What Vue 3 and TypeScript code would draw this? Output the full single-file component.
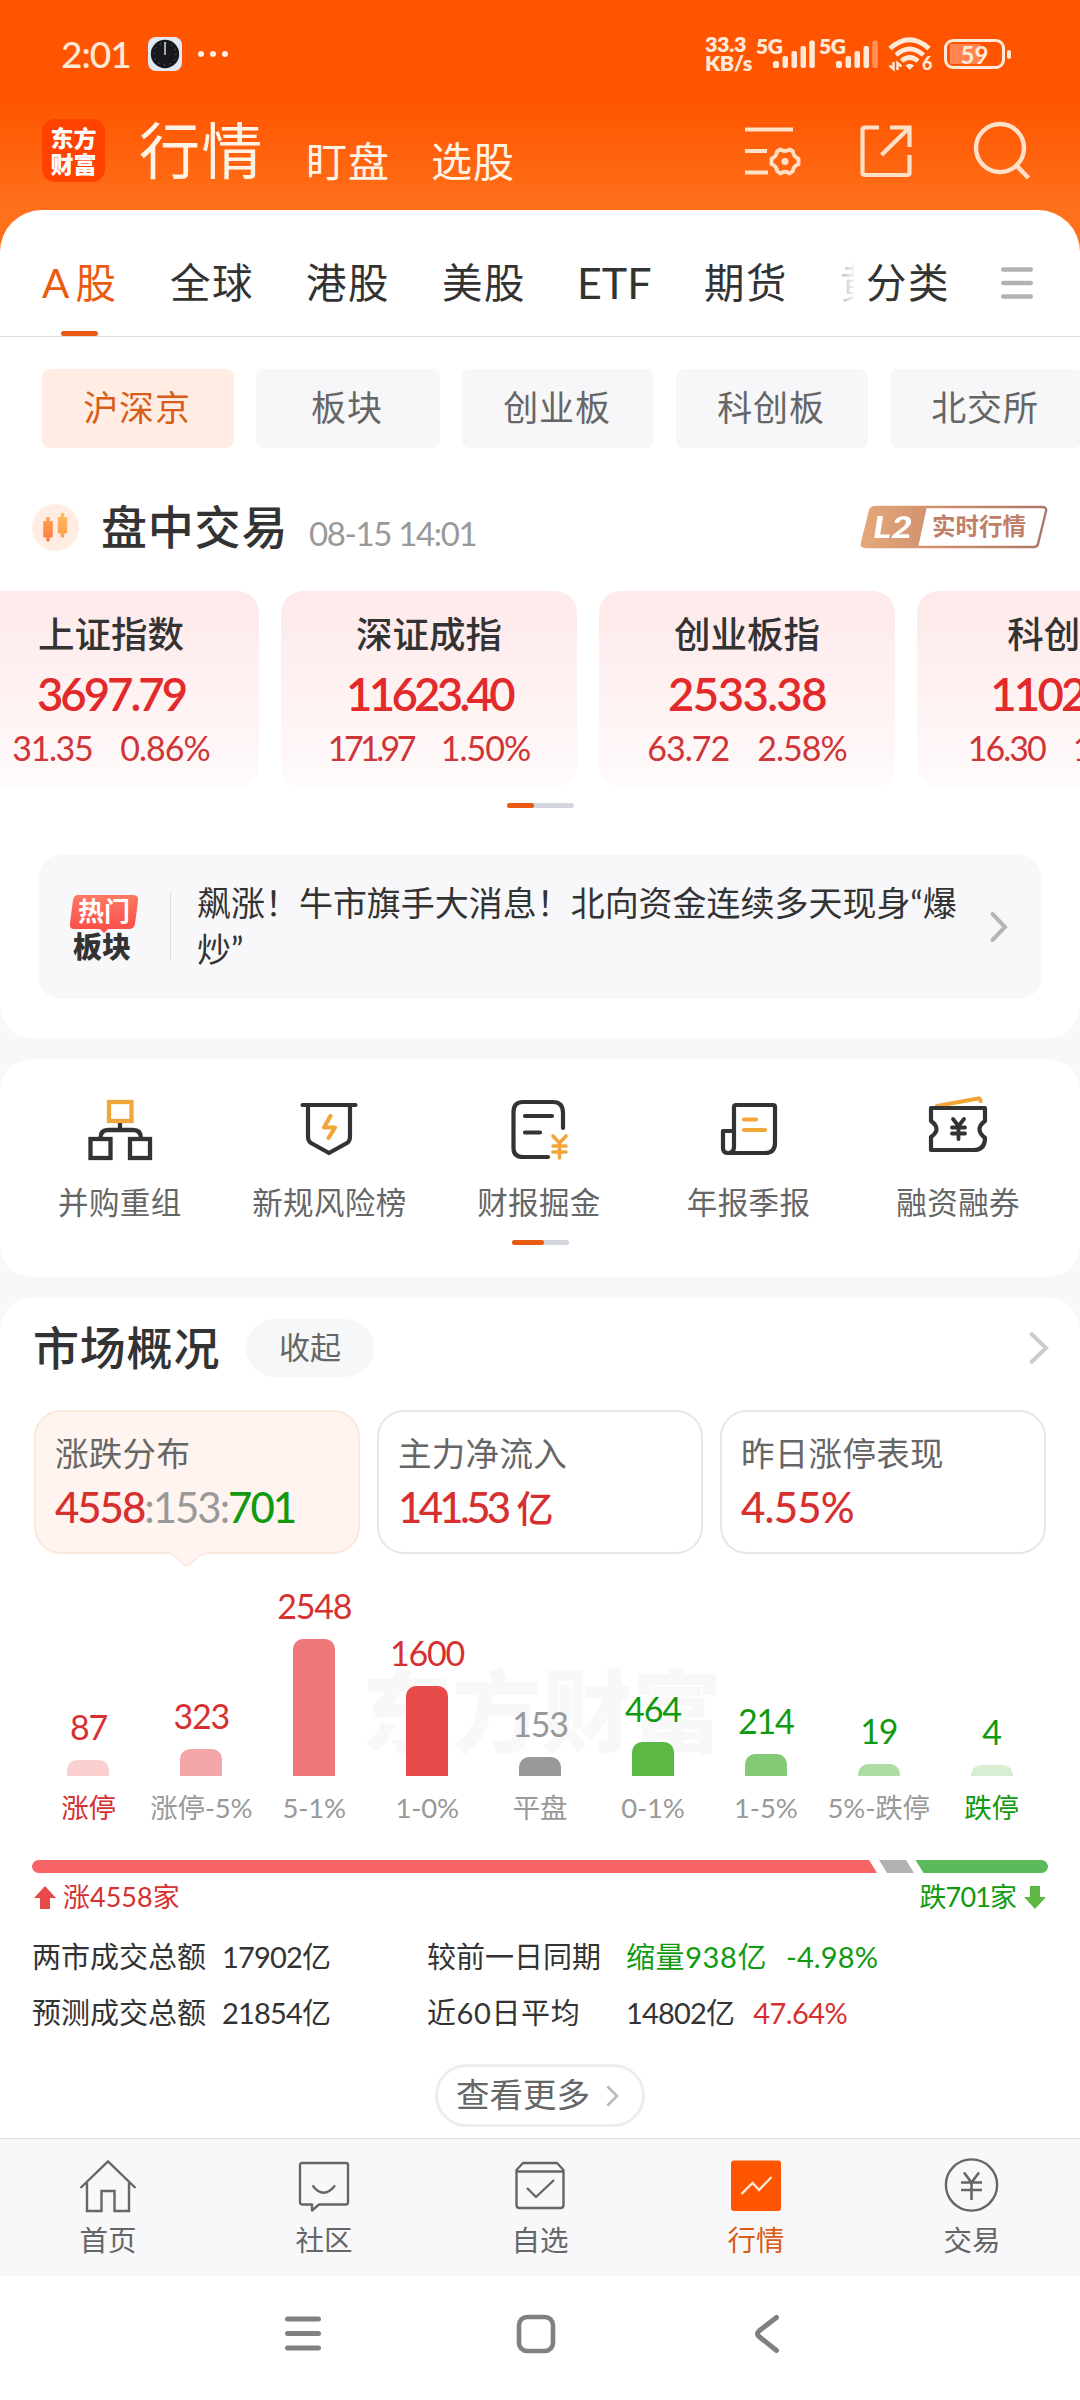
<script setup lang="ts">
interface IndexCard { name: string; value: string; change: string; pct: string; tracking: number; subTracking: number }
interface Bar { label: string; count: number; height: number; color: string; tone: string; labelTone: string }

const markets = ['A股', '全球', '港股', '美股', 'ETF', '期货', '黄']
const boards = ['沪深京', '板块', '创业板', '科创板', '北交所']

const indices: IndexCard[] = [
  { name: '上证指数', value: '3697.79', change: '31.35', pct: '0.86%', tracking: -3, subTracking: -1.4 },
  { name: '深证成指', value: '11623.40', change: '171.97', pct: '1.50%', tracking: -3.7, subTracking: -3.6 },
  { name: '创业板指', value: '2533.38', change: '63.72', pct: '2.58%', tracking: -1.6, subTracking: -1 },
  { name: '科创50', value: '1102.26', change: '16.30', pct: '1.50%', tracking: -2.8, subTracking: -2 },
]

const bars: Bar[] = [
  { label: '涨停', count: 87, height: 15.5, color: '#f9cfd0', tone: 'up', labelTone: 'up' },
  { label: '涨停-5%', count: 323, height: 27, color: '#f4a5a7', tone: 'up', labelTone: 'flat' },
  { label: '5-1%', count: 2548, height: 136.5, color: '#ee7779', tone: 'up', labelTone: 'flat' },
  { label: '1-0%', count: 1600, height: 90, color: '#e84a4a', tone: 'up', labelTone: 'flat' },
  { label: '平盘', count: 153, height: 18.5, color: '#999999', tone: 'flat', labelTone: 'flat' },
  { label: '0-1%', count: 464, height: 34, color: '#5cb843', tone: 'down', labelTone: 'flat' },
  { label: '1-5%', count: 214, height: 21.5, color: '#84ca76', tone: 'down', labelTone: 'flat' },
  { label: '5%-跌停', count: 19, height: 12, color: '#aedda4', tone: 'down', labelTone: 'flat' },
  { label: '跌停', count: 4, height: 11, color: '#d7eed3', tone: 'down', labelTone: 'down' },
]
</script>

<template>
  <div class="screen">
    <div class="status">
      <span class="clock">2:01</span>
      <svg class="app-icon" width="34" height="34" viewBox="0 0 34 34">
        <rect width="34" height="34" rx="8" fill="#e3e9f2" />
        <circle cx="17" cy="17" r="14.2" fill="#17181b" />
        <circle cx="17" cy="17" r="11" fill="none" stroke="#888" stroke-width="1" stroke-dasharray="1 4.76" />
        <path d="M17 5v13" stroke="#cfcfcf" stroke-width="1.6" />
      </svg>
      <svg class="dots" width="32" height="8" viewBox="0 0 32 8" fill="#fff0e2">
        <circle cx="4" cy="4" r="3" /><circle cx="16" cy="4" r="3" /><circle cx="28" cy="4" r="3" />
      </svg>
      <div class="speed"><span>33.3</span><span>KB/s</span></div>
      <div class="signal">
        <span>5G</span>
        <svg width="42" height="28" viewBox="0 0 42 28" fill="#ffe9d8">
          <rect x="0" y="21" width="6" height="7" rx="2" /><rect x="9.5" y="16" width="5.5" height="12" rx="2" />
          <rect x="18.5" y="11" width="5.5" height="17" rx="2" /><rect x="27.5" y="6" width="5.5" height="22" rx="2" />
          <rect x="36.3" y="0.5" width="5.5" height="27.5" rx="2" />
        </svg>
      </div>
      <div class="signal second">
        <span>5G</span>
        <svg width="42" height="28" viewBox="0 0 42 28" fill="#ffe9d8">
          <rect x="0" y="21" width="6" height="7" rx="2" /><rect x="9.5" y="16" width="5.5" height="12" rx="2" />
          <rect x="18.5" y="11" width="5.5" height="17" rx="2" /><rect x="27.5" y="6" width="5.5" height="22" rx="2" />
          <rect x="36.3" y="0.5" width="5.5" height="27.5" rx="2" opacity=".4" />
        </svg>
      </div>
      <div class="wifi">
        <svg width="44" height="34" viewBox="0 0 44 34" fill="none" stroke="#ffe9d8">
          <path d="M2 11.5Q21.500 -6 41 11.500" stroke-width="5" />
          <path d="M8 18Q21.500 6 35.500 18" stroke-width="4.600" />
          <path d="M13.500 24Q21.500 17 30 24" stroke-width="4.600" />
          <path d="M17.500 28.500Q21.500 25 26 28.500L21.700 33z" fill="#ffe9d8" stroke="none" />
          <path d="M5.500 25v7l-4-3.500M9.500 33v-7l4 3.500" stroke-width="2.400" />
        </svg>
        <span>6</span>
      </div>
      <div class="battery"><span>59</span></div>
    </div>

    <div class="nav">
      <div class="logo"><span>东方</span><span>财富</span></div>
      <span class="nav-main">行情</span>
      <span class="nav-sub">盯盘</span>
      <span class="nav-sub">选股</span>
      <div class="nav-icons">
        <svg width="58" height="60" viewBox="0 0 58 60" fill="none" stroke="#ffe0c8" stroke-width="4.200">
          <path d="M0 8.500h48M0 30h22M0 51.500h23" />
          <path d="M35.500 28.500Q40 31.500 44.500 28.500L48 30.500Q48.200 35.500 53.500 37.800V43.300Q48.200 45 48 50L44.500 52.500Q40 49 35.500 52.500L32 50Q31.800 45 26.500 43.300V37.800Q31.800 35.500 32 30.500Z" stroke-width="3.800" stroke-linejoin="round" />
          <circle cx="40" cy="40.500" r="3.500" fill="#ffe0c8" stroke="none" />
        </svg>
        <svg width="53" height="60" viewBox="0 0 53 60" fill="none" stroke="#ffe0c8" stroke-width="4.200">
          <path d="M19 6.500H5Q2.500 6.500 2.500 9V52Q2.500 54 5 54H47Q49.500 54 49.500 52V34M30 6.500H49.500V26M49 7L21.500 34" />
        </svg>
        <svg width="57" height="60" viewBox="0 0 57 60" fill="none" stroke="#ffe0c8" stroke-width="4.400">
          <circle cx="26" cy="27" r="24" /><path d="M42.500 44.500L54.500 57" />
        </svg>
      </div>
    </div>

    <section class="panel first">
      <div class="tabs">
        <span v-for="(m, i) in markets" :key="m" :class="['tab', { on: i === 0, latin: m === 'ETF', fade: m === '黄' }]">{{ m }}</span>
        <span class="tab sort">分类</span>
        <svg class="burger" width="32" height="32" viewBox="0 0 32 32" stroke="#b2b2b2" stroke-width="4.400" stroke-linecap="round">
          <path d="M2.200 2.500H29.800M2.200 16H29.800M2.200 29.500H29.800" />
        </svg>
      </div>
      <div class="chips">
        <span v-for="(b, i) in boards" :key="b" :class="['chip', { on: i === 0, short: b.length === 2 }]">{{ b }}</span>
      </div>

      <div class="session">
        <svg width="47" height="47" viewBox="0 0 47 47">
          <defs>
            <linearGradient id="candle" x1="0" y1="0" x2="0" y2="1"><stop offset="0" stop-color="#ffa04e" /><stop offset="1" stop-color="#ff7c48" /></linearGradient>
            <linearGradient id="candle2" x1="0" y1="0" x2="0" y2="1"><stop offset="0" stop-color="#ffbc5c" /><stop offset="1" stop-color="#ff9c4e" /></linearGradient>
          </defs>
          <circle cx="23.500" cy="23.500" r="23.500" fill="#ffece2" />
          <path d="M14.800 13.500h2.400v4h3v15.500h-3v4h-2.400v-4h-3V17.500h3z" fill="url(#candle)" stroke="url(#candle)" stroke-linejoin="round" />
          <path d="M29.300 9.500h2.400v4h3v15.500h-3v4h-2.400v-4h-3V13.500h3z" fill="url(#candle2)" stroke="url(#candle2)" stroke-linejoin="round" />
        </svg>
        <h2>盘中交易</h2>
        <time>08-15 14:01</time>
        <div class="level">
          <svg width="187" height="44" viewBox="0 0 187 44">
            <defs><linearGradient id="lv" x1="0" x2="187" y1="0" y2="0" gradientUnits="userSpaceOnUse"><stop offset="0" stop-color="#e5a878" /><stop offset=".5" stop-color="#c98a6c" /><stop offset="1" stop-color="#a97868" /></linearGradient></defs>
            <path d="M15 2H181Q186 2 185 6L177 39Q176 42 173 42H5Q0 42 1 38L9 6Q10 2 15 2Z" fill="none" stroke="url(#lv)" stroke-width="2.400" />
            <path d="M15 1H66L57 43H5Q0 43 1 38L9 6Q10 1 15 1Z" fill="url(#lv)" />
          </svg>
          <b>L2</b><span>实时行情</span>
        </div>
      </div>

      <div class="indices">
        <div v-for="c in indices" :key="c.name" class="index">
          <div class="index-name">{{ c.name }}</div>
          <div class="index-value" :style="{ letterSpacing: c.tracking + 'px' }">{{ c.value }}</div>
          <div class="index-sub"><span :style="{ letterSpacing: c.subTracking + 'px' }">{{ c.change }}</span><span>{{ c.pct }}</span></div>
        </div>
      </div>
      <div class="pager"><i></i></div>

      <div class="news">
        <div class="hot">
          <svg width="70" height="40" viewBox="0 0 70 40">
            <defs><linearGradient id="hot" x1="0" y1="0" x2="0" y2="1"><stop offset="0" stop-color="#fc7a62" /><stop offset="1" stop-color="#fa4a47" /></linearGradient></defs>
            <path d="M9 1H64Q70 1 69 7L66 30Q65 35 60 35H39L35 39L31 35H5Q0 35 1 29L4 6Q5 1 9 1Z" fill="url(#hot)" />
          </svg>
          <span class="hot-top">热门</span>
          <span class="hot-bottom">板块</span>
        </div>
        <p>飙涨！牛市旗手大消息！北向资金连续多天现身“爆炒”</p>
        <svg class="news-arrow" width="18" height="32" viewBox="0 0 18 32" fill="none" stroke="#b5b5b5" stroke-width="4" stroke-linecap="round"><path d="M2.500 3L15 16L2.500 29" /></svg>
      </div>
    </section>

    <section class="panel tools">
      <div class="tool-row">
        <div class="tool">
          <svg width="66" height="66" viewBox="0 0 66 66" fill="none" stroke="#333" stroke-width="4.300">
            <path d="M33 25V34M13.500 40Q13.500 32 21 32H46Q54 32 54 40" />
            <rect x="3.500" y="41" width="20" height="19" /><rect x="43" y="41" width="20" height="19" />
            <rect x="22" y="4" width="22.500" height="19" stroke="#f2a63a" />
          </svg><span>并购重组</span>
        </div>
        <div class="tool">
          <svg width="66" height="66" viewBox="0 0 66 66" fill="none" stroke="#333" stroke-width="4.200" stroke-linecap="round" stroke-linejoin="round">
            <path d="M6.500 7H59.500M12 8V39Q12 43 15 45L33 55L51 45Q54 43 54 39V8" />
            <path d="M34.500 18L28 29.500H39L32.500 40" stroke="#f2a63a" />
          </svg><span>新规风险榜</span>
        </div>
        <div class="tool">
          <svg width="66" height="66" viewBox="0 0 66 66" fill="none" stroke="#333" stroke-width="4.200" stroke-linecap="round">
            <path d="M57 30V15Q57 4 47 4H17Q7.500 4 7.500 14V50Q7.500 59 17 59H42M19 18H46M19 34.500H34" />
            <path d="M47 38L53.500 45L60 38M47 48H60M47 54H60M53.500 46V60" stroke="#f2a63a" stroke-width="3.600" />
          </svg><span>财报掘金</span>
        </div>
        <div class="tool">
          <svg width="66" height="66" viewBox="0 0 66 66" fill="none" stroke="#333" stroke-width="4.200" stroke-linejoin="round" stroke-linecap="round">
            <path d="M18 49V9Q18 7 20 7H57Q59 7 59 9V45Q59 55 49 55H12Q7 55 7 50V33H18M18 33V49Q18 54 13 55" />
            <path d="M28 21.500H40M28 32H49" stroke="#f2a63a" />
          </svg><span>年报季报</span>
        </div>
        <div class="tool">
          <svg width="66" height="66" viewBox="0 0 66 66" fill="none" stroke="#333" stroke-width="4.200" stroke-linejoin="round" stroke-linecap="round">
            <path d="M12 8L53 0.500Q55 0 55.500 3" stroke="#f2a63a" />
            <path d="M6 10H60V23Q49 31 60 40Q60 52 49 52H6V39Q17 31 6 23Z" />
            <path d="M28 21L33.500 28L39 21M27 29.500H40M27 35.500H40M33.500 28V41" stroke-width="3.800" />
          </svg><span>融资融券</span>
        </div>
      </div>
      <div class="pager small"><i></i></div>
    </section>

    <section class="panel market">
      <header>
        <h2>市场概况</h2><span class="fold">收起</span>
        <svg width="20" height="34" viewBox="0 0 20 34" fill="none" stroke="#cccccc" stroke-width="4"><path d="M1.500 2L17 17L1.500 32" /></svg>
      </header>
      <div class="stats">
        <div class="stat on">
          <div class="stat-name">涨跌分布</div>
          <div class="stat-value dist"><span class="up">4558</span><span class="colon">:</span><span class="flat">153</span><span class="colon">:</span><span class="down">701</span></div>
          <svg class="pointer" width="38" height="15" viewBox="0 0 38 15"><path d="M0 0L2 1.500Q5 3 8 6L15 12.500Q18 14.500 21 12.500L29 5Q33 1.500 37 1.500L38 0Z" fill="#fff4ef" /><path d="M1 2.500Q5 3 8 6L15 12.500Q18 14.500 21 12.500L29 5Q33 2 37 2.500" fill="none" stroke="#fbe7dc" stroke-width="1.600" /></svg>
        </div>
        <div class="stat">
          <div class="stat-name">主力净流入</div>
          <div class="stat-value flow up">141.53<em>亿</em></div>
        </div>
        <div class="stat">
          <div class="stat-name">昨日涨停表现</div>
          <div class="stat-value up">4.55%</div>
        </div>
      </div>

      <div class="chart">
        <div class="watermark">东方财富</div>
        <div v-for="b in bars" :key="b.label" class="col">
          <span :class="['count', b.tone]">{{ b.count }}</span>
          <i :style="{ height: b.height + 'px', background: b.color }"></i>
          <span :class="['bar-label', b.labelTone]">{{ b.label }}</span>
        </div>
      </div>

      <svg class="ratio" width="1016" height="13" viewBox="0 0 1016 13">
        <path d="M6.500 0H837L845 13H6.500A6.500 6.500 0 0 1 6.500 0Z" fill="#f76465" />
        <path d="M847 0H874L882 13H855Z" fill="#b2b2b2" />
        <path d="M883.500 0H1009.500A6.500 6.500 0 0 1 1009.500 13H891.500Z" fill="#5aba5c" />
      </svg>
      <div class="totals">
        <svg width="22" height="23" viewBox="0 0 22 23"><path d="M11 0L22 12H16V23H6V12H0Z" fill="#e84a4a" /></svg>
        <span class="up">涨4558家</span>
        <span class="down right">跌701家</span>
        <svg width="22" height="23" viewBox="0 0 22 23"><path d="M11 23L0 11H6V0H16V11H22Z" fill="#5cb843" /></svg>
      </div>

      <div class="turnover">
        <span>两市成交总额</span><span class="num">17902亿</span>
        <span>较前一日同期</span><span class="down wide">缩量938亿<b>-4.98%</b></span>
        <span>预测成交总额</span><span class="num">21854亿</span>
        <span class="wide">近60日平均</span><span class="num">14802亿<b class="up">47.64%</b></span>
      </div>

      <div class="more">
        <span>查看更多</span>
        <svg width="13" height="22" viewBox="0 0 13 22" fill="none" stroke="#b8b8b8" stroke-width="2.600"><path d="M1.500 1.500L11 11L1.500 20.500" /></svg>
      </div>
    </section>

    <footer class="tabbar">
      <div class="item">
        <svg width="58" height="54" viewBox="0 0 58 54" fill="none" stroke="#666" stroke-width="2.400"><path d="M1.500 29L29 2.500L56.500 29M8 24V52H22.500V32H35.500V52H50V24" /></svg>
        <span>首页</span>
      </div>
      <div class="item">
        <svg width="58" height="54" viewBox="0 0 58 54" fill="none" stroke="#666" stroke-width="2.400" stroke-linejoin="round"><path d="M7 4H51Q53 4 53 6V43Q53 45.500 51 45.500H24L17 51.500V45.500H7Q5 45.500 5 43V6Q5 4 7 4Z" /><path d="M17.500 26.500Q28.500 41 40 26.500" /></svg>
        <span>社区</span>
      </div>
      <div class="item">
        <svg width="58" height="54" viewBox="0 0 58 54" fill="none" stroke="#666" stroke-width="2.400" stroke-linejoin="round"><path d="M12 4H46L52.500 11V46Q52.500 49 49.500 49H8.500Q5.500 49 5.500 46V11ZM5.500 12.500H52.500M16 29L25 38L43 21" /></svg>
        <span>自选</span>
      </div>
      <div class="item on">
        <svg width="58" height="54" viewBox="0 0 58 54" fill="none"><rect x="4" y="1.500" width="50" height="50.500" rx="3" fill="#ff5500" /><path d="M14.500 35L25.500 24L32 31L44.500 18" stroke="#ffe9d8" stroke-width="2.400" /></svg>
        <span>行情</span>
      </div>
      <div class="item">
        <svg width="58" height="54" viewBox="0 0 58 54" fill="none" stroke="#666" stroke-width="2.400"><circle cx="28.500" cy="26" r="25.600" /><path d="M21 13.500L28.500 23.500L36 13.500M18 23.500H39M18 31H39M28.500 23.500V41" stroke-width="2.600" /></svg>
        <span>交易</span>
      </div>
    </footer>

    <div class="sysnav">
      <svg width="38" height="40" viewBox="0 0 38 40" stroke="#808080" stroke-width="5" stroke-linecap="round"><path d="M3.500 5H34.500M3.500 19.500H34.500M3.500 34H34.500" /></svg>
      <svg width="40" height="40" viewBox="0 0 40 40" fill="none" stroke="#808080" stroke-width="4.600"><rect x="3" y="3" width="34" height="34" rx="8" /></svg>
      <svg width="26" height="40" viewBox="0 0 26 40" fill="none" stroke="#808080" stroke-width="5" stroke-linecap="round"><path d="M22.500 3.500L5 17Q2 20 5 22.500L22.500 36.500" /></svg>
    </div>
  </div>
</template>

<style>
html, body { margin: 0; background: #fff; }
</style>

<style scoped>
* { box-sizing: border-box; }
.screen {
  width: 1080px; height: 2400px; overflow: hidden; display: flex; flex-direction: column;
  font-family: Lato, "Noto Sans CJK SC", sans-serif; color: #333;
  background: linear-gradient(#ff5500 0, #ff5500 100px, #ff701b 210px, #ff701b 260px, #f6f8fa 261px);
}
svg { display: block; flex: none; overflow: visible; }
h2, p { margin: 0; }
.up { color: #d63031; }
.down { color: #109a10; }
.flat { color: #999; }

.status { height: 108px; flex: none; display: flex; align-items: center; padding-left: 61px; color: #ffe9d8; }
.clock { width: 87px; font-size: 37px; line-height: 40px; font-weight: 500; letter-spacing: -1px; }
.dots { margin-left: 15px; margin-right: 476px; }
.speed { width: 51px; display: flex; flex-direction: column; font-size: 21.500px; line-height: 19px; font-weight: 800; letter-spacing: -.4px; }
.signal { display: flex; align-items: flex-end; height: 34px; width: 63px; padding-bottom: 3px; }
.signal span { width: 17px; overflow: visible; font-size: 21px; line-height: 18px; font-weight: 800; align-self: flex-start; letter-spacing: -.5px; white-space: nowrap; }
.wifi { display: flex; align-items: flex-end; width: 56px; margin-left: 6px; }
.wifi span { font-size: 18px; font-weight: 900; line-height: 16px; margin-left: -10px; }
.battery { position: relative; width: 61px; height: 30px; border: 3px solid #ffe9d8; border-radius: 9px; display: flex; justify-content: center; align-items: center; font-size: 24px; font-weight: 700; background: linear-gradient(#ff8450, #ff8450) 3px 2px / 30px 20px no-repeat; }
.battery::after { content: ""; position: absolute; right: -9px; top: 8px; width: 4px; height: 9px; border-radius: 2px; background: #ffe9d8; }

.nav { height: 102px; flex: none; display: flex; padding-left: 42px; color: #fff4e6; }
.logo { width: 63px; height: 63px; margin-top: 11px; border-radius: 13px; background: #ff4200; color: #fff; display: flex; flex-direction: column; align-items: center; justify-content: center; font-size: 23px; line-height: 26px; font-weight: 900; }
.nav-main { margin: 13px 0 0 34px; width: 126px; font-size: 61px; line-height: 60px; letter-spacing: 1.500px; }
.nav-sub { margin: 33px 0 0 41px; width: 84px; font-size: 41px; line-height: 42px; letter-spacing: 1px; }
.nav-icons { display: flex; gap: 59px; margin: 13px 0 0 230px; }
.nav-icons svg + svg { margin-left: -2.500px; }
.nav-icons svg:last-child { margin-left: 2px; }

.panel { background: #fff; flex: none; border-radius: 32px; }
.first { height: 828px; border-radius: 42px 42px 32px 32px; }
.tabs { height: 127px; border-bottom: 1px solid #dedede; display: flex; padding: 44px 0 0 41px; font-size: 40.500px; line-height: 58px; }
.tab { width: 84px; margin-right: 52px; letter-spacing: 1.500px; white-space: nowrap; }
.tab.on { position: relative; width: 77px; color: #ea5b10; letter-spacing: 6px; text-indent: 1px; }
.tab.on::after { content: ""; position: absolute; left: 20px; top: 77px; width: 37px; height: 5px; border-radius: 3px; background: #ea5b10; }
.tab.latin { width: 75px; font-size: 43px; letter-spacing: 0; margin-left: -1px; }
.tab.fade { width: 14px; margin-right: 12px; overflow: hidden; color: transparent; background: linear-gradient(90deg, #bbb, #f4f4f4); background-clip: text; -webkit-background-clip: text; }
.tab.sort { margin-right: 51px; }
.burger { margin-top: 13px; }
.chips { display: flex; gap: 22px; margin: 32px 0 0 42px; overflow: hidden; }
.chip { flex: none; width: 192px; height: 79px; border-radius: 8px; background: #f7f7f9; color: #666; text-align: center; font-size: 35px; line-height: 76px; letter-spacing: .9px; text-indent: -2px; }
.chip.short { width: 184px; }
.chip.on { background: #ffede4; color: #d85d18; }

.session { display: flex; height: 60px; margin: 49px 0 0 32px; align-items: center; }
.session h2 { margin-left: 22px; font-size: 46px; line-height: 60px; font-weight: 500; letter-spacing: .8px; width: 208px; }
.session time { font-size: 33px; line-height: 36px; color: #999; margin-top: 12px; letter-spacing: -1.350px; }
.level { position: relative; margin-left: auto; margin-right: 32px; }
.level b { position: absolute; left: 12px; top: 0; font-size: 31px; line-height: 43px; font-weight: 900; font-style: italic; color: #fff; transform: scaleX(1.2); transform-origin: left; }
.level span { position: absolute; left: 71px; top: 0; font-size: 23.500px; line-height: 42px; font-weight: 700; color: #c08068; white-space: nowrap; }

.indices { display: flex; gap: 22px; margin: 34px 0 0 -37px; width: 1117px; overflow: hidden; }
.index { flex: none; width: 296px; height: 196px; border-radius: 22px; background: linear-gradient(#fee9ea, #fffafa); text-align: center; padding-top: 21px; }
.index-name { font-size: 36.500px; line-height: 44px; font-weight: 500; }
.index-value { font-size: 45.500px; line-height: 60px; margin-top: 8px; font-weight: 600; color: #e22a2b; }
.index-sub { display: flex; justify-content: center; gap: 28px; font-size: 34px; line-height: 44px; margin-top: 2px; color: #cf3436; letter-spacing: -1px; }
.pager { width: 67px; height: 5px; margin: 16px auto 0; border-radius: 3px; background: #d3d6dc; }
.pager i { display: block; width: 27px; height: 5px; border-radius: 3px; background: #ea5b10; }
.news { display: flex; align-items: flex-start; width: 1002px; height: 144px; margin: 47px auto 0; border-radius: 21px; background: #f8f8fa; padding: 38px 0 0 30px; }
.hot { position: relative; width: 102px; height: 68px; border-right: 1px solid #ddd; padding-top: 1px; }
.hot-top { position: absolute; left: 9px; top: 3px; font-size: 26px; line-height: 30px; font-weight: 700; color: #fff; }
.hot-bottom { position: absolute; left: 4px; top: 38px; font-size: 29px; line-height: 32px; font-weight: 900; color: #333; }
.news p { width: 772px; margin: -13px 0 0 26px; font-size: 34px; line-height: 46px; letter-spacing: -.03px; }
.news-arrow { margin: 18px 0 0 21px; }

.tools { height: 218px; margin-top: 21px; }
.tool-row { display: flex; padding: 39px 17px 0 15px; }
.tool { flex: 1; display: flex; flex-direction: column; align-items: center; }
.tool span { font-size: 30.500px; line-height: 38px; margin-top: 18.500px; color: #666; letter-spacing: .4px; }
.pager.small { width: 57px; margin-top: 19.500px; }
.pager.small i { width: 32px; }

.market { height: 840px; margin-top: 21px; border-radius: 32px 32px 0 0; padding-top: 20px; }
.market header { display: flex; align-items: center; height: 60px; padding: 0 31px 0 33px; }
.market h2 { width: 213px; font-size: 46px; font-weight: 500; line-height: 60px; letter-spacing: .8px; }
.fold { width: 128px; height: 58px; border-radius: 29px; background: #f6f7f9; color: #666; text-align: center; font-size: 31px; line-height: 56px; }
.market header svg { margin-left: auto; }
.stats { display: flex; gap: 17px; margin: 32px 0 0 34px; }
.stat { position: relative; width: 326px; height: 144px; border: 2px solid #e6e6e6; border-radius: 27px; padding: 18px 0 0 19px; }
.stat.on { background: #fff4ef; border-color: #fbe7dc; }
.stat-name { font-size: 33.500px; line-height: 46px; color: #666; letter-spacing: .3px; }
.stat-value { font-size: 42px; line-height: 52px; margin-top: 5px; font-weight: 500; letter-spacing: -.8px; white-space: nowrap; }
.stat-value em { font-style: normal; font-size: 37px; margin-left: 9px; }
.flow { letter-spacing: -3.700px; }
.dist { letter-spacing: -2.050px; }
.dist .flat, .colon { font-weight: 400; color: #999; }
.pointer { position: absolute; left: 133px; bottom: -15px; }
.chart { position: relative; display: flex; align-items: flex-end; height: 273.500px; margin: 0 32px; }
.watermark { position: absolute; left: 330px; top: 96px; font-size: 90px; line-height: 120px; font-weight: 900; color: #f8f8f8; }
.col { position: relative; flex: 1; width: 0; display: flex; flex-direction: column; align-items: center; }
.col i { width: 42px; border-radius: 10px 10px 0 0; }
.count { font-size: 34px; line-height: 40px; margin-bottom: 13px; letter-spacing: -1.200px; }
.bar-label { font-size: 27.500px; line-height: 40px; margin-top: 12px; letter-spacing: -.2px; white-space: nowrap; }
.ratio { margin: 32.500px 0 0 32px; }
.totals { display: flex; align-items: center; height: 40px; margin: 4px 34px 0; font-size: 27px; }
.totals span { margin: -3px 8px 0 7px; }
.totals .right { margin-left: auto; letter-spacing: -.9px; }
.turnover { display: grid; grid-template-columns: 190px 205px 199px auto; row-gap: 16px; margin: 20px 0 0 32px; font-size: 29px; line-height: 40px; white-space: nowrap; }
.turnover b { font-weight: 400; margin-left: 19px; letter-spacing: .1px; }
.turnover .num { letter-spacing: -.8px; }
.turnover .num b { letter-spacing: -.6px; }
.turnover .wide { letter-spacing: .6px; }
.more { width: 210px; height: 63px; margin: 31px auto 0; border: 3px solid #ededed; border-radius: 32px; display: flex; align-items: center; padding-left: 18px; font-size: 33.500px; line-height: 50px; color: #666; }
.more span { width: 150px; margin-top: -3px; }

.tabbar { height: 138px; flex: none; border-top: 1px solid #dfdfdf; background: #f8f8fa; display: flex; padding-top: 20px; }
.item { width: 216px; display: flex; flex-direction: column; align-items: center; font-size: 28.500px; line-height: 40px; color: #666; }
.item span { margin-top: 7px; }
.item.on { color: #d85d18; }
.sysnav { flex: 1; background: #fff; display: flex; padding: 38px 0 0 284px; }
.sysnav svg + svg { margin-left: 194px; }
.sysnav svg:last-child { margin-left: 198px; }
</style>
